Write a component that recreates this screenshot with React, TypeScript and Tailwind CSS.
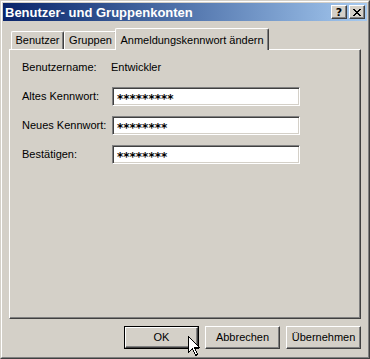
const font = "font-['Liberation_Sans',Arial,sans-serif]";

function CaptionButton({ children }: { children: React.ReactNode }) {
  return (
    <div className="w-[16px] h-[14px] bg-[#d4d0c8] border border-t-white border-l-white border-r-[#404040] border-b-[#404040] shadow-[inset_-1px_-1px_0_#808080] flex items-center justify-center">
      {children}
    </div>
  );
}

function Field({ label, value }: { label: string; value: string }) {
  return (
    <div className="flex items-center h-[19px]">
      <span className="w-[90px]">{label}</span>
      <div className="w-[188px] h-[19px] bg-white border border-t-[#808080] border-l-[#808080] border-b-white border-r-white shadow-[inset_1px_1px_0_#404040,inset_-1px_-1px_0_#d4d0c8] flex items-center pl-[4px]">
        <span className="font-['DejaVu_Sans',sans-serif] font-bold text-[12px] leading-none pt-[4px]">{value}</span>
      </div>
    </div>
  );
}

function Button({ label, isDefault }: { label: string; isDefault?: boolean }) {
  if (isDefault) {
    return (
      <div className="w-[75px] h-[23px] border border-black">
        <div className="w-full h-full flex items-center justify-center border border-t-white border-l-white border-r-[#404040] border-b-[#404040] shadow-[inset_-1px_-1px_0_#808080]">
          {label}
        </div>
      </div>
    );
  }
  return (
    <div className="w-[75px] h-[23px] flex items-center justify-center border border-t-white border-l-white border-r-[#404040] border-b-[#404040] shadow-[inset_-1px_-1px_0_#808080]">
      {label}
    </div>
  );
}

export default function App() {
  return (
    <div className={`relative w-[370px] h-[359px] bg-[#d4d0c8] text-black text-[11px] ${font} border border-t-[#d4d0c8] border-l-[#d4d0c8] border-r-[#404040] border-b-[#404040]`}>
      <div className="h-full flex flex-col border border-t-white border-l-white border-r-[#808080] border-b-[#808080] p-px">
        {/* title bar */}
        <div className="h-[18px] flex items-center justify-between bg-linear-to-r from-[#0a246a] to-[#a6caf0] pl-[2px] pr-[2px]">
          <span className="text-white font-bold text-[13px] leading-none">Benutzer- und Gruppenkonten</span>
          <div className="flex gap-[2px]">
            <CaptionButton>
              <span className="font-bold text-[11px] leading-none font-['DejaVu_Sans',sans-serif]">?</span>
            </CaptionButton>
            <CaptionButton>
              <svg width="8" height="7" viewBox="0 0 8 7" shapeRendering="crispEdges">
                <path d="M0 0h2v1H0zM6 0h2v1H6zM1 1h2v1H1zM5 1h2v1H5zM2 2h4v1H2zM3 3h2v1H3zM2 4h4v1H2zM1 5h2v1H1zM5 5h2v1H5zM0 6h2v1H0zM6 6h2v1H6z" fill="#000" />
              </svg>
            </CaptionButton>
          </div>
        </div>

        <div className="flex-1 px-[6px] pt-[7px]">
          {/* tabs */}
          <div className="h-[21px] flex items-end pl-[2px]">
            <div className="w-[53px] h-[18px] flex items-center justify-center border-t border-l border-t-white border-l-white border-r border-r-[#404040] shadow-[inset_-1px_0_0_#808080] rounded-tl-[2px] rounded-tr-[2px]">
              Benutzer
            </div>
            <div className="w-[53px] h-[18px] flex items-center justify-center border-t border-l border-t-white border-l-white border-r border-r-[#404040] shadow-[inset_-1px_0_0_#808080] rounded-tl-[2px] rounded-tr-[2px]">
              Gruppen
            </div>
            <div className="relative z-10 -ml-[2px] -mb-px w-[154px] h-[22px] bg-[#d4d0c8] flex items-start pt-[3px] justify-center border-t border-l border-t-white border-l-white border-r border-r-[#404040] shadow-[inset_-1px_0_0_#808080] rounded-tl-[2px] rounded-tr-[2px]">
              Anmeldungskennwort ändern
            </div>
          </div>

          {/* panel */}
          <div className="w-[352px] h-[270px] border border-t-white border-l-white border-r-[#404040] border-b-[#404040] shadow-[inset_-1px_-1px_0_#808080] pt-[8px] pl-[12px] flex flex-col gap-[10px]">
            <div className="flex items-center h-[19px]">
              <span className="w-[89px]">Benutzername:</span>
              <span>Entwickler</span>
            </div>
            <Field label="Altes Kennwort:" value="*********" />
            <Field label="Neues Kennwort:" value="********" />
            <Field label="Bestätigen:" value="********" />
          </div>

          {/* buttons */}
          <div className="mt-[7px] flex justify-end gap-[6px]">
            <Button label="OK" isDefault />
            <Button label="Abbrechen" />
            <Button label="Übernehmen" />
          </div>
        </div>
      </div>

      {/* mouse pointer */}
      <svg className="absolute left-[187px] top-[335px]" width="13" height="21" viewBox="0 0 13 21" shapeRendering="crispEdges">
        <path d="M0.5 0.5 L0.5 16.5 L4.5 12.5 L7.5 19.5 L9.5 18.5 L6.5 11.5 L11.5 11.5 Z" fill="#fff" stroke="#000" strokeWidth="1" />
      </svg>
    </div>
  );
}
